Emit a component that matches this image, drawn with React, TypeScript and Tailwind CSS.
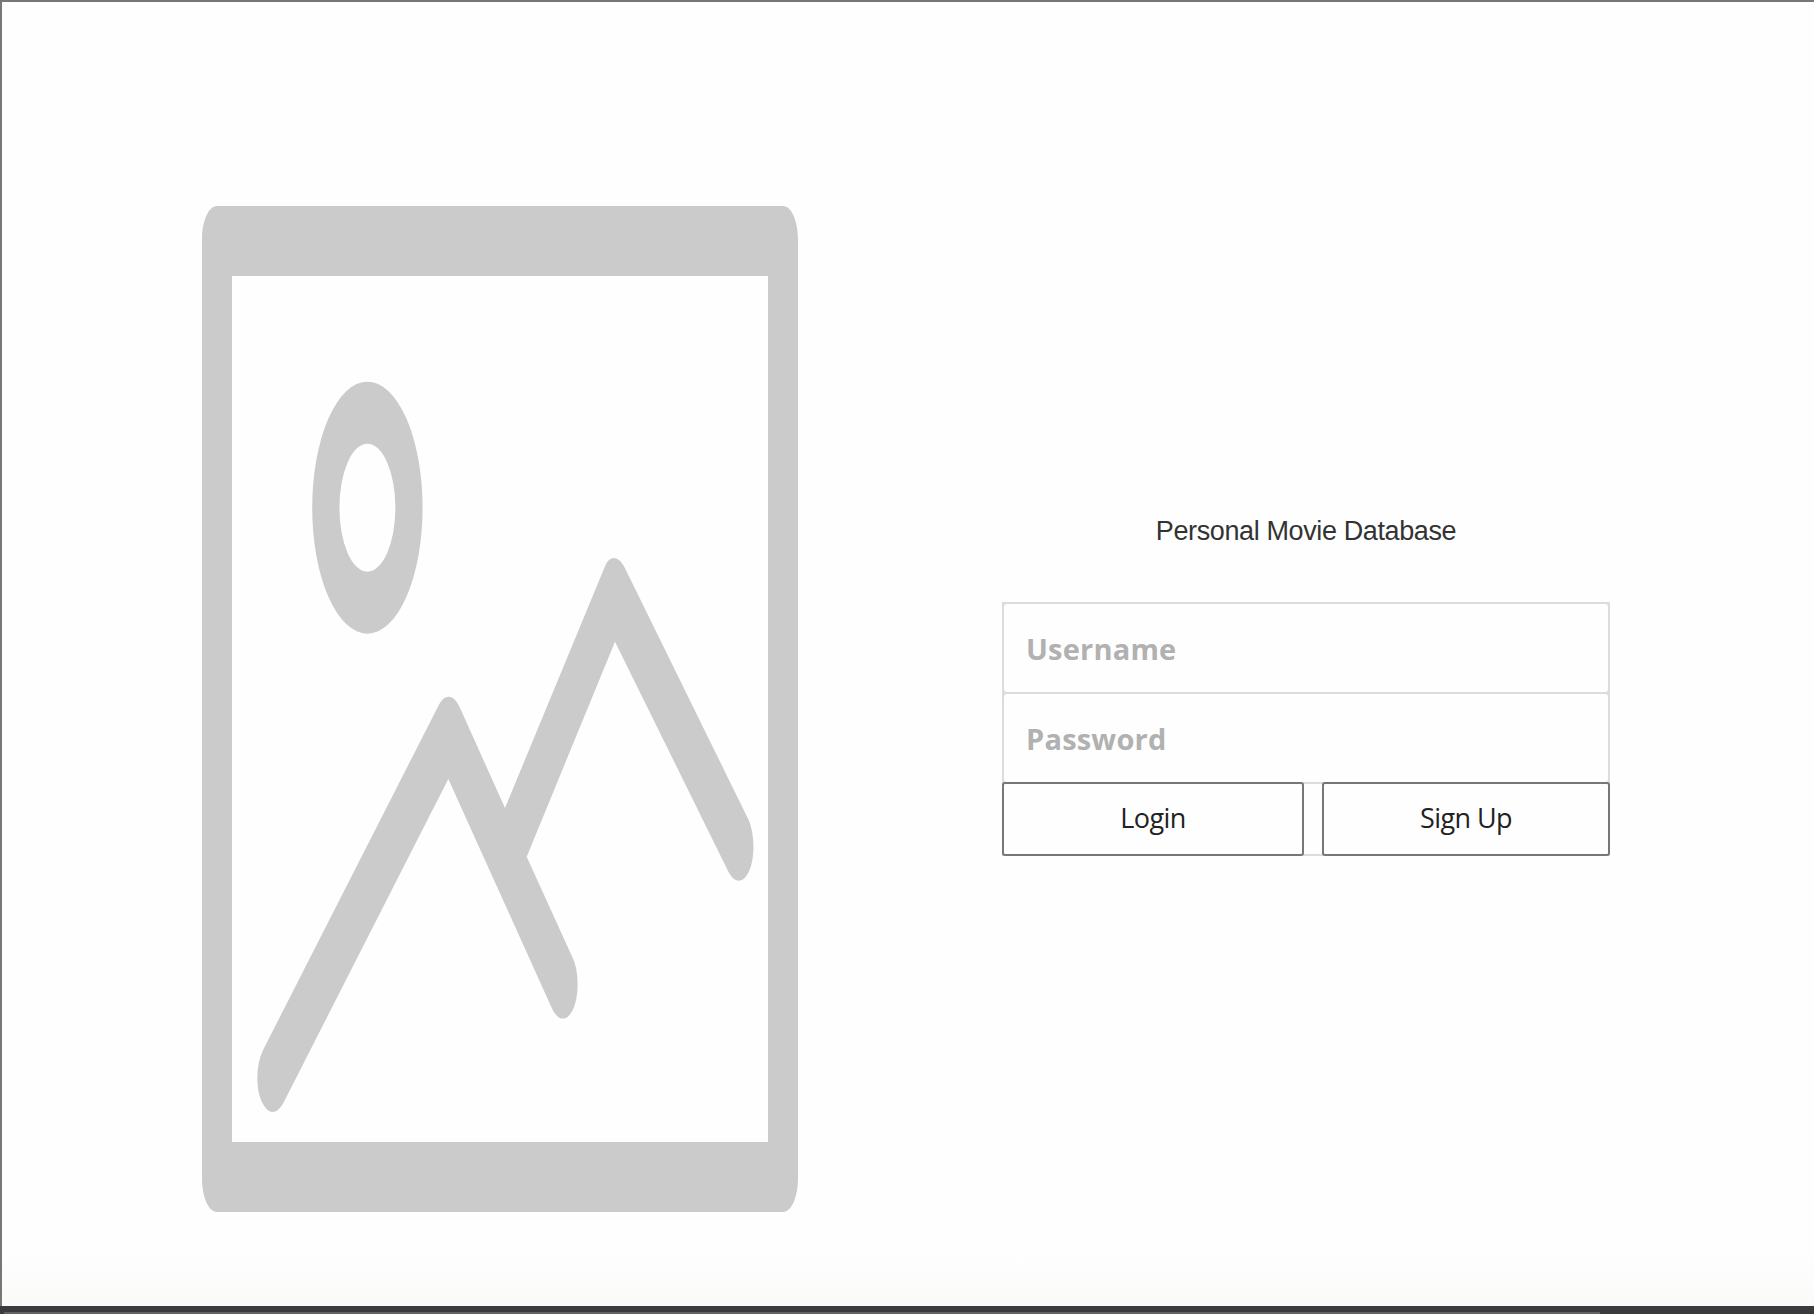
function PlaceholderImage() {
  return (
    <svg className="block h-[1006px] w-[596px] shrink-0" viewBox="202 206 596 1006" role="img" aria-label="Poster placeholder">
      <g fill="#cbcbcb">
        <path
          fillRule="evenodd"
          d="M217 206H783C791.500 206 798 221 798 240V1178C798 1197 791.500 1212 783 1212H217C208.500 1212 202 1197 202 1178V240C202 221 208.500 206 217 206ZM232 276V1142H768V276Z"
        />
        <path
          fillRule="evenodd"
          d="M312.200 507.700a55.200 126 0 1 0 110.400 0a55.200 126 0 1 0 -110.400 0ZM339.400 507.700a28 64 0 1 1 56 0a28 64 0 1 1 -56 0Z"
        />
        <path d="M438.300 706C444.500 693.500 453.500 693 460.300 708.500L505 808L604.700 567C609.500 554.800 618.500 554.800 625 568.300L748.300 819.300C756 836 755.500 869 743.500 879C738 883 732.500 880 727.800 870.500L615 641.700L526.700 856.700L573.300 959.300C580 975 579.500 1007 567.500 1017C561.500 1021 556 1017.500 551.200 1006.700L448.300 779L283.500 1102.700C277 1114.500 269 1115 263 1104C256 1092 255 1067 262.700 1050.700Z" />
      </g>
    </svg>
  );
}

const fieldClass =
  "block w-full rounded-[3px] bg-[#fefefe] pl-[22px] font-['Open_Sans',sans-serif] text-[29px] font-bold tracking-[0.2px] text-[#333] placeholder:text-[#b1b1b1] placeholder:opacity-100 outline-none";
const buttonClass =
  "rounded-[3px] border-2 border-[#777] bg-[#fefefe] pb-[2px] font-['Open_Sans',sans-serif] text-[27px] tracking-[-0.6px] text-[#222]";

export default function App() {
  return (
    <div className="flex h-[1314px] w-[1814px] flex-col overflow-hidden bg-[#3b3b3f]">
      <main className="flex h-[1306px] items-start border-t-2 border-l-2 border-[#777] bg-[#fefefe] bg-linear-to-b from-[#fefefe] from-96% to-[#fafaf9] pl-[200px]">
        <div className="pt-[204px]">
          <PlaceholderImage />
        </div>
        <form className="ml-[204px] w-[608px] pt-[509px]" onSubmit={(e) => e.preventDefault()}>
          <h1 className="h-[91px] text-center font-['Liberation_Sans',sans-serif] text-[27px] leading-[40px] tracking-[-0.38px] whitespace-nowrap text-[#333]">
            Personal Movie Database
          </h1>
          <div className="bg-[#dcdcdc]">
            <div className="flex flex-col gap-[2px] px-[2px] pt-[2px]">
              <input className={`${fieldClass} h-[88px]`} placeholder="Username" aria-label="Username" />
              <input className={`${fieldClass} h-[88px]`} type="password" placeholder="Password" aria-label="Password" />
            </div>
            <div className="flex h-[74px]">
              <button className={`${buttonClass} w-[302px]`}>Login</button>
              <div className="my-[2px] flex-1 bg-[#fefefe]" />
              <button className={`${buttonClass} w-[288px]`}>Sign Up</button>
            </div>
          </div>
        </form>
      </main>
      <div className="mt-[6px] ml-[4px] h-[2px] w-[1596px] bg-[#656163]" />
    </div>
  );
}
